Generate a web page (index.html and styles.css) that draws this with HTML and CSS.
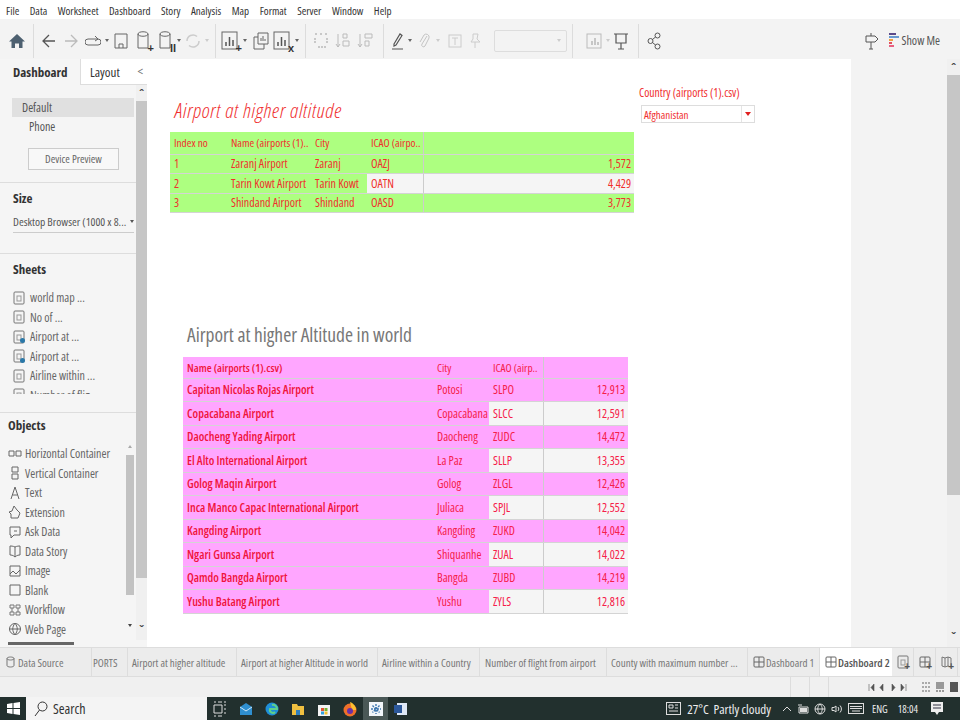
FILE: index.html
```html
<!DOCTYPE html>
<html lang="en">
<head>
  <meta charset="UTF-8">
  <title>Tableau - Dashboard 2</title>
  <link rel="stylesheet" href="styles.css">
</head>
<body>

  <svg class="defs" width="0" height="0">
    <symbol id="sheet" viewBox="0 0 12 14"><rect x="1" y="1" width="10" height="12" rx="1" fill="none" stroke="#777"/><rect x="4" y="5" width="4" height="5" fill="none" stroke="#999"/></symbol>
    <symbol id="cyl" viewBox="0 0 16 22"><path d="M3 4c0-3 10-3 10 0v14H3zM3 4c0 3 10 3 10 0" fill="none" stroke="#666"/></symbol>
    <symbol id="chart" viewBox="0 0 22 22"><rect x="2" y="2" width="15" height="17" fill="none" stroke="#666"/><path d="M6 16v-4M9.5 16V7M13 16v-6" stroke="#555" stroke-width="1.5"/></symbol>
    <symbol id="dash" viewBox="0 0 12 12"><rect x="1" y="1" width="10" height="10" rx="1" fill="none" stroke="#666"/><path d="M1 6h10M6 1v10" stroke="#666"/></symbol>
  </svg>

  <nav class="menubar">
    <span>File</span><span>Data</span><span>Worksheet</span><span>Dashboard</span><span>Story</span><span>Analysis</span><span>Map</span><span>Format</span><span>Server</span><span>Window</span><span>Help</span>
  </nav>

  <div class="toolbar">
    <span class="tool"><svg width="18" height="18" viewBox="0 0 18 18"><path d="M9 2 1 9.5h2.5V16H7v-4.5h4V16h3.5V9.5H17z" fill="#4d6070"/></svg></span>
    <span class="sep"></span>
    <span class="tool"><svg width="16" height="16" viewBox="0 0 16 16"><path d="M14 8H2M8 2 2 8l6 6" fill="none" stroke="#555" stroke-width="1.3"/></svg></span>
    <span class="tool"><svg width="16" height="16" viewBox="0 0 16 16"><path d="M2 8h12M8 2l6 6-6 6" fill="none" stroke="#bbb" stroke-width="1.3"/></svg></span>
    <span class="tool"><svg width="16" height="12" viewBox="0 0 16 12"><path d="M3 4h10a2.5 2.5 0 0 1 0 6H3a2.5 2.5 0 0 1 0-6M10 1l3 3-3 2" fill="none" stroke="#666"/></svg></span>
    <span class="caret"></span>
    <span class="tool"><svg width="14" height="16" viewBox="0 0 14 16"><path d="M1 1h12v14H1zM5 15v-4h4v4" fill="none" stroke="#666"/></svg></span>
    <span class="tool has-plus"><svg width="16" height="22"><use href="#cyl"/></svg><b class="plus">+</b></span>
    <span class="tool has-plus"><svg width="16" height="22"><use href="#cyl"/></svg><b class="plus">II</b></span>
    <span class="caret"></span>
    <span class="tool"><svg width="16" height="16" viewBox="0 0 16 16"><path d="M2 8a6 6 0 0 1 10-4.5M14 8a6 6 0 0 1-10 4.5" fill="none" stroke="#ccc" stroke-width="1.5"/></svg></span>
    <span class="caret off"></span>
    <span class="sep"></span>
    <span class="tool has-plus"><svg width="22" height="22"><use href="#chart"/></svg><b class="plus">+</b></span>
    <span class="caret wide"></span>
    <span class="tool"><svg width="18" height="18" viewBox="0 0 18 18"><path d="M6 1h10v11H6zM2 5h4M2 5v12h10v-5" fill="none" stroke="#666"/><path d="M9 9V6M11 9V4M13 9V7" stroke="#666"/></svg></span>
    <span class="tool has-plus"><svg width="22" height="22"><use href="#chart"/></svg><b class="plus">x</b></span>
    <span class="caret"></span>
    <span class="sep"></span>
    <span class="tool"><svg width="16" height="18" viewBox="0 0 16 18"><path d="M2 2h2M7 2h2M12 2h2M2 6v6M14 6v6M5 15h8" fill="none" stroke="#bbb" stroke-width="1.5" stroke-dasharray="2 1"/></svg></span>
    <span class="tool"><svg width="16" height="18" viewBox="0 0 16 18"><path d="M3 2v13M1 12l2 3 2-3M8 2h4v4H8zM8 9h6v5H8z" fill="none" stroke="#bbb"/></svg></span>
    <span class="tool"><svg width="16" height="18" viewBox="0 0 16 18"><path d="M3 2v13M1 12l2 3 2-3M8 2h7v4H8zM8 9h4v5H8z" fill="none" stroke="#bbb"/></svg></span>
    <span class="sep push"></span>
    <span class="tool slim"><svg width="14" height="18" viewBox="0 0 14 18"><path d="M3 12 9 2l2 1.5L5 13l-2 1zM1 17h11" fill="none" stroke="#555" stroke-width="1.2"/></svg></span>
    <span class="caret"></span>
    <span class="tool"><svg width="12" height="18" viewBox="0 0 12 18"><path d="M9 4 4 12a1.8 1.8 0 0 0 3 2l4-8a3 3 0 0 0-5-3L2 10" fill="none" stroke="#c4c4c4"/></svg></span>
    <span class="caret off"></span>
    <span class="tool tight apart"><svg width="14" height="14" viewBox="0 0 14 14"><rect x="1" y="1" width="12" height="12" fill="none" stroke="#ccc"/><path d="M4 4h6M7 4v7" stroke="#ccc"/></svg></span>
    <span class="tool tight"><svg width="12" height="16" viewBox="0 0 12 16"><path d="M4 1h5L8 6l3 3H2l2-3zM6 9v6" fill="none" stroke="#ccc"/></svg></span>
    <span class="fit-select"><span class="caret off"></span></span>
    <span class="sep wide"></span>
    <span class="tool"><svg width="16" height="16" viewBox="0 0 16 16"><rect x="1" y="1" width="14" height="14" fill="none" stroke="#bbb"/><path d="M6 12V8M9 12V5M12 12V9" stroke="#999"/></svg></span>
    <span class="caret off"></span>
    <span class="tool tight"><svg width="16" height="18" viewBox="0 0 16 18"><path d="M1 2h14M3 2v9h10V2M8 11v6M5 17h6" fill="none" stroke="#555" stroke-width="1.2"/></svg></span>
    <span class="sep push"></span>
    <span class="tool"><svg width="14" height="18" viewBox="0 0 14 18"><circle cx="3.5" cy="9" r="2.5" fill="none" stroke="#555"/><circle cx="10.5" cy="3.5" r="2.5" fill="none" stroke="#555"/><circle cx="10.5" cy="14.5" r="2.5" fill="none" stroke="#555"/><path d="m5.5 7.5 3-2.5M5.5 10.5l3 2.5" stroke="#555"/></svg></span>
    <span class="toolbar-right">
      <svg width="14" height="18" viewBox="0 0 14 18"><path d="M1 4h9l3 3-3 3H1zM6 1v3M6 10v7M4 17h4" fill="none" stroke="#555"/></svg>
      <svg class="showme-icon" width="11" height="15" viewBox="0 0 11 15"><path d="M1 0h7v2H1z" fill="#5b4a8a"/><path d="M1 3h10v2H1z" fill="#6a9ad0"/><path d="M1 6h4v2H1z" fill="#f0a040"/><path d="M1 9h3v2H1z" fill="#e05060"/><path d="M1 12h5v2H1z" fill="#e86080"/></svg>
      <span class="showme">Show Me</span>
    </span>
  </div>

  <div class="workspace">
    <aside class="sidebar">
      <div class="side-main">
        <div class="tabs">
          <span class="tab active">Dashboard</span>
          <span class="tab">Layout</span>
          <span class="collapse">&lt;</span>
        </div>

        <div class="side-scroll">
          <div class="side-content">
            <section class="device">
              <div class="device-row selected">Default</div>
              <div class="device-row indent">Phone</div>
              <div class="device-btn">Device Preview</div>
            </section>

            <section class="size">
              <h4>Size</h4>
              <div class="size-select"><span>Desktop Browser (1000 x 8...</span><i class="down"></i></div>
            </section>

            <section class="sheets">
              <h4>Sheets</h4>
              <ul class="sheet-list">
                <li><svg width="12" height="14"><use href="#sheet"/></svg>world map ...</li>
                <li><svg width="12" height="14"><use href="#sheet"/></svg>No of ...</li>
                <li class="used"><svg width="12" height="14"><use href="#sheet"/></svg>Airport at ...</li>
                <li class="used"><svg width="12" height="14"><use href="#sheet"/></svg>Airport at ...</li>
                <li><svg width="12" height="14"><use href="#sheet"/></svg>Airline within ...</li>
                <li><svg width="12" height="14"><use href="#sheet"/></svg>Number of flig...</li>
              </ul>
            </section>

            <section class="objects">
              <h4>Objects</h4>
              <div class="objects-body">
                <ul class="object-list">
                  <li><svg width="14" height="14" viewBox="0 0 14 14"><path d="M1 4h5v5H1zM8 4h5v5H8z" fill="none" stroke="#666"/></svg>Horizontal Container</li>
                  <li><svg width="14" height="14" viewBox="0 0 14 14"><path d="M4 1h6v5H4zM4 8h6v5H4z" fill="none" stroke="#666"/></svg>Vertical Container</li>
                  <li><svg width="14" height="14" viewBox="0 0 14 14"><path d="m3 13 4-12 4 12M4.5 9h5" fill="none" stroke="#666"/></svg>Text</li>
                  <li><svg width="14" height="14" viewBox="0 0 14 14"><path d="M6 1l3 4 3 3-2 5H3V9L1 7l3-1z" fill="none" stroke="#666"/></svg>Extension</li>
                  <li><svg width="14" height="14" viewBox="0 0 14 14"><path d="M2 2h10v8H6l-3 3v-3H2z" fill="none" stroke="#666"/><path d="M6 6h3" stroke="#666"/></svg>Ask Data</li>
                  <li><svg width="14" height="14" viewBox="0 0 14 14"><path d="M7 3C5 2 3 2 2 2v9c1 0 3 0 5 2 2-2 4-2 5-2V2c-1 0-3 0-5 1zM7 3v10" fill="none" stroke="#666"/></svg>Data Story</li>
                  <li><svg width="14" height="14" viewBox="0 0 14 14"><path d="M2 2h10v10H2zM2 10l3-3 3 3 4-4" fill="none" stroke="#666"/></svg>Image</li>
                  <li><svg width="14" height="14" viewBox="0 0 14 14"><path d="M2 2h10v10H2z" fill="none" stroke="#666"/></svg>Blank</li>
                  <li><svg width="14" height="14" viewBox="0 0 14 14"><path d="M2 2h4v3H2zM8 2h4v3H8zM2 9h4v3H2zM8 9h4v3H8zM4 5v4M10 5v4" fill="none" stroke="#777"/></svg>Workflow</li>
                  <li><svg width="14" height="14" viewBox="0 0 14 14"><circle cx="7" cy="7" r="5.5" fill="none" stroke="#666"/><path d="M1.5 7h11M7 1.5c-3 3-3 8 0 11M7 1.5c3 3 3 8 0 11" fill="none" stroke="#666"/></svg>Web Page</li>
                </ul>
                <div class="objects-scroll"><i class="arrow up"></i><span class="objects-thumb"></span><i class="arrow dn"></i></div>
              </div>
            </section>
          </div>

          <div class="side-scrollbar"><b class="chev">&#710;</b><span class="side-thumb"></span><b class="chev low">&#711;</b></div>
        </div>

        <div class="side-hscroll"><span></span></div>
      </div>
    </aside>

    <main class="canvas">
      <div class="top-row">
        <div class="top-left">
          <h1 class="title-red">Airport at higher altitude</h1>
          <table class="grid green">
            <colgroup><col class="g1"><col class="g2"><col class="g3"><col class="g4"><col></colgroup>
            <tr class="head"><td>Index no</td><td>Name (airports (1)..</td><td>City</td><td class="rb">ICAO (airpo..</td><td></td></tr>
            <tr><td>1</td><td>Zaranj Airport</td><td>Zaranj</td><td class="rb">OAZJ</td><td class="num">1,572</td></tr>
            <tr class="alt"><td>2</td><td>Tarin Kowt Airport</td><td>Tarin Kowt</td><td class="rb">OATN</td><td class="num">4,429</td></tr>
            <tr><td>3</td><td>Shindand Airport</td><td>Shindand</td><td class="rb">OASD</td><td class="num">3,773</td></tr>
          </table>
        </div>
        <div class="filter">
          <div class="filter-label">Country (airports (1).csv)</div>
          <div class="filter-box"><span>Afghanistan</span><i class="filter-arrow"></i></div>
        </div>
      </div>

      <h2 class="title-grey">Airport at higher Altitude in world</h2>
      <table class="grid pink">
        <colgroup><col class="p1"><col class="p2"><col class="p3"><col></colgroup>
        <tr class="head"><td>Name (airports (1).csv)</td><td>City</td><td class="rb">ICAO (airp..</td><td></td></tr>
        <tr><td class="name">Capitan Nicolas Rojas Airport</td><td>Potosi</td><td class="rb">SLPO</td><td class="num">12,913</td></tr>
        <tr class="alt"><td class="name">Copacabana Airport</td><td>Copacabana</td><td class="rb">SLCC</td><td class="num">12,591</td></tr>
        <tr><td class="name">Daocheng Yading Airport</td><td>Daocheng</td><td class="rb">ZUDC</td><td class="num">14,472</td></tr>
        <tr class="alt"><td class="name">El Alto International Airport</td><td>La Paz</td><td class="rb">SLLP</td><td class="num">13,355</td></tr>
        <tr><td class="name">Golog Maqin Airport</td><td>Golog</td><td class="rb">ZLGL</td><td class="num">12,426</td></tr>
        <tr class="alt"><td class="name">Inca Manco Capac International Airport</td><td>Juliaca</td><td class="rb">SPJL</td><td class="num">12,552</td></tr>
        <tr><td class="name">Kangding Airport</td><td>Kangding</td><td class="rb">ZUKD</td><td class="num">14,042</td></tr>
        <tr class="alt"><td class="name">Ngari Gunsa Airport</td><td>Shiquanhe</td><td class="rb">ZUAL</td><td class="num">14,022</td></tr>
        <tr><td class="name">Qamdo Bangda Airport</td><td>Bangda</td><td class="rb">ZUBD</td><td class="num">14,219</td></tr>
        <tr class="alt"><td class="name">Yushu Batang Airport</td><td>Yushu</td><td class="rb">ZYLS</td><td class="num">12,816</td></tr>
      </table>
    </main>

    <div class="margin-area"></div>
    <div class="page-scrollbar"><b class="chev">&#710;</b><span class="page-thumb"></span><b class="chev low">&#711;</b></div>
  </div>

  <div class="sheet-tabs">
    <span class="sheet-tab t-source"><svg width="9" height="12" viewBox="0 0 9 12"><path d="M1 2.5c0-2 7-2 7 0v7c0 2-7 2-7 0zM1 2.5c0 2 7 2 7 0" fill="none" stroke="#777"/></svg>Data Source</span>
    <span class="sheet-tab t-ports">PORTS</span>
    <span class="sheet-tab t-a">Airport at higher altitude</span>
    <span class="sheet-tab t-b">Airport at higher Altitude in world</span>
    <span class="sheet-tab t-c">Airline within a Country</span>
    <span class="sheet-tab t-d">Number of flight from airport</span>
    <span class="sheet-tab t-e">County with maximum number ...</span>
    <span class="sheet-tab t-f"><svg width="12" height="12"><use href="#dash"/></svg>Dashboard 1</span>
    <span class="sheet-tab t-g"><svg width="12" height="12"><use href="#dash"/></svg>Dashboard 2</span>
    <span class="tab-add"><svg width="12" height="14"><use href="#sheet"/></svg><b>+</b></span>
    <span class="tab-add"><svg width="12" height="12"><use href="#dash"/></svg><b>+</b></span>
    <span class="tab-add"><svg width="12" height="14" viewBox="0 0 12 14"><path d="M1 2l3 1 3-1 3 1v9l-3-1-3 1-3-1zM4 3v9M7 2v9" fill="none" stroke="#777"/></svg><b>+</b></span>
  </div>

  <div class="statusbar">
    <span class="st-cell st-a"></span><span class="st-cell st-b"></span><span class="st-cell st-b"></span>
    <span class="st-nav">
      <svg width="40" height="7" viewBox="0 0 40 7"><path d="M1 0v7M6 0 3 3.5 6 7zM15 0l-3 3.5L15 7zM24 0l3 3.5L24 7zM33 0l3 3.5L33 7zM38 0v7" fill="#555" stroke="#555" stroke-width=".6"/></svg>
    </span>
    <span class="st-views">
      <svg width="9" height="10" viewBox="0 0 9 10"><path d="M0 0h2v2H0zM3 0h2v2H3zM6 0h2v2H6zM0 4h2v2H0zM3 4h2v2H3zM6 4h2v2H6zM0 8h2v2H0zM3 8h2v2H3zM6 8h2v2H6z" fill="#aaa"/></svg>
      <svg width="9" height="10" viewBox="0 0 9 10"><path d="M0 0h8v7H0zM0 8h2v2H0zM3 8h2v2H3zM6 8h2v2H6z" fill="#999"/></svg>
      <svg width="9" height="10" viewBox="0 0 9 10"><path d="M0 0h8v10H0z" fill="#555"/></svg>
    </span>
  </div>

  <footer class="taskbar">
    <span class="start"><svg width="13" height="13" viewBox="0 0 13 13"><path d="M0 2l5.5-1v5H0zM6.5 1 13 0v6H6.5zM0 7h5.5v5L0 11zM6.5 7H13v6l-6.5-1z" fill="#fff"/></svg></span>
    <span class="search"><svg width="14" height="16" viewBox="0 0 14 16"><circle cx="8.5" cy="5.5" r="4.5" fill="none" stroke="#333"/><path d="M5.5 9 1 15" stroke="#333"/></svg>Search</span>
    <span class="task-icons">
      <svg width="14" height="16" viewBox="0 0 14 16"><path d="M1 1h2M5 1h4M11 1h2M1 4h8v8H1zM11 4h2M11 8h2M11 12h2M1 15h2M5 15h4" fill="none" stroke="#ddd"/></svg>
      <svg width="14" height="14" viewBox="0 0 14 14"><path d="M1 5 7 1l6 4v8H1z" fill="#2f8fd0"/><path d="m1 5 6 4 6-4" fill="none" stroke="#cfe8f8"/></svg>
      <svg width="14" height="14" viewBox="0 0 14 14"><circle cx="7" cy="7" r="6.5" fill="#1f8fd8"/><path d="M7 3a4 4 0 0 1 5 4H5a3 3 0 0 0 5 3" fill="none" stroke="#5fd08a" stroke-width="2"/></svg>
      <svg width="14" height="14" viewBox="0 0 14 14"><path d="M1 2h5l1 2h6v9H1z" fill="#f0c040"/><path d="M5 8h4v5H5z" fill="#2f80c0"/></svg>
      <svg width="14" height="14" viewBox="0 0 14 14"><rect x="1" y="3" width="12" height="11" fill="#f4f4f4"/><path d="M4 6h3v3H4z" fill="#e05030"/><path d="M7.5 6h3v3h-3z" fill="#70b030"/><path d="M4 9.5h3v3H4z" fill="#30a0e0"/><path d="M7.5 9.5h3v3h-3z" fill="#f0c030"/></svg>
      <svg width="14" height="16" viewBox="0 0 14 16"><circle cx="7" cy="9" r="6.5" fill="#f0702a"/><path d="M7 1c3 1 6 4 6 8H9z" fill="#ffc030"/><circle cx="7" cy="10" r="3" fill="#6a2fa8"/></svg>
      <span class="task-active"><svg width="14" height="14" viewBox="0 0 14 14"><rect width="14" height="14" fill="#f2f6fa"/><path d="M7 2v10M2 7h10M3.5 3.5l7 7M10.5 3.5l-7 7" stroke="#3f78b0" stroke-width="1.4" stroke-dasharray="2 1"/></svg></span>
      <svg width="14" height="14" viewBox="0 0 14 14"><rect x="3" y="1" width="10" height="12" fill="#dfe8f6"/><rect x="0" y="3" width="8" height="8" fill="#2b579a"/></svg>
    </span>
    <span class="tray">
      <svg class="news" width="15" height="13" viewBox="0 0 15 13"><rect x=".5" y=".5" width="14" height="12" fill="none" stroke="#ddd"/><path d="M3 3h4v3H3zM9 3h3M9 6h3M3 9h9" fill="none" stroke="#ddd"/></svg>
      <span class="weather">27°C&nbsp; Partly cloudy</span>
      <svg class="up" width="10" height="6" viewBox="0 0 10 6"><path d="m1 5 4-4 4 4" fill="none" stroke="#ddd"/></svg>
      <svg width="12" height="10" viewBox="0 0 12 10"><path d="M2 3h9v6H2zM1 1h4" fill="none" stroke="#ddd"/><path d="M3 4h7v4H3z" fill="#ddd"/></svg>
      <svg width="12" height="12" viewBox="0 0 12 12"><circle cx="6" cy="6" r="5" fill="none" stroke="#ddd"/><path d="M1 6h10M6 1c-3 3-3 7 0 10M6 1c3 3 3 7 0 10" fill="none" stroke="#ddd"/></svg>
      <svg width="12" height="10" viewBox="0 0 12 10"><path d="M1 3.5h2L5 2v6L3 6.5H1zM7 3a3 3 0 0 1 0 4M9 1.5a5 5 0 0 1 0 7" fill="none" stroke="#ddd"/></svg>
      <svg class="keyboard" width="16" height="11" viewBox="0 0 16 11"><rect x=".5" y=".5" width="15" height="10" fill="none" stroke="#ddd"/><path d="M2 3.5h12M2 5.5h12M4 8h8" stroke="#ddd"/></svg>
      <span class="tray-text eng">ENG</span>
      <span class="tray-text clock">18:04</span>
      <svg class="notif" width="12" height="14" viewBox="0 0 12 14"><path d="M0 0h12v10H8l-2 3-2-3H0z" fill="#eee"/><path d="M2 3h8M2 6h8" stroke="#334"/></svg>
    </span>
  </footer>

</body>
</html>
```

FILE: styles.css
```css
* {
  box-sizing: border-box;
}

html, body {
  margin: 0;
  height: 720px;
  overflow: hidden;
}

body {
  font-family: "Open Sans", "Liberation Sans", sans-serif;
  font-stretch: 75%;
  font-size: 12px;
  color: #444;
  background: #fff;
  display: flex;
  flex-direction: column;
}

.defs {
  position: absolute;
}

svg {
  flex: none;
  display: block;
}

ul {
  list-style: none;
  margin: 0;
  padding: 0;
}

/* menu + toolbar */
.menubar {
  height: 19px;
  display: flex;
  gap: 10.5px;
  align-items: center;
  padding: 2px 0 0 6px;
  font-size: 11px;
  color: #333;
}

.toolbar {
  height: 40px;
  background: #f3f3f3;
  display: flex;
  align-items: center;
  padding: 3px 0 0 6px;
}

.tool {
  width: 22px;
  height: 26px;
  flex: none;
  display: flex;
  align-items: center;
  justify-content: center;
  position: relative;
}

.tool.slim {
  width: 19px;
}

.tool.tight {
  width: 20px;
}

.tool.apart {
  margin-left: 4px;
}

.plus {
  position: absolute;
  right: 0;
  bottom: 0;
  font: bold 11px/11px "Liberation Sans", sans-serif;
  color: #333;
}

.caret {
  width: 6px;
  height: 3px;
  flex: none;
  position: relative;
}

.caret::after {
  content: "";
  position: absolute;
  left: 1px;
  top: 0;
  border: 2px solid transparent;
  border-top: 3px solid #666;
  border-bottom: 0;
}

.caret.off::after {
  border-top-color: #ccc;
}

.caret.wide {
  width: 8px;
}

.sep {
  width: 1px;
  height: 34px;
  flex: none;
  background: #dcdcdc;
  margin: 0 4px 0 5px;
}

.sep.push {
  margin-left: 7px;
}

.sep.wide {
  margin-right: 10px;
}

.fit-select {
  width: 73px;
  height: 22px;
  flex: none;
  margin-left: 9px;
  border: 1px solid #ddd;
  border-radius: 2px;
  display: flex;
  align-items: center;
  justify-content: flex-end;
  padding-right: 4px;
}

.toolbar-right {
  margin-left: auto;
  display: flex;
  align-items: center;
  padding-right: 20px;
}

.showme-icon {
  margin-left: 9px;
}

.showme {
  margin-left: 3px;
  font-size: 12px;
  color: #555;
}

/* main area */
.workspace {
  height: 588px;
  display: flex;
}

.sidebar {
  width: 147px;
  flex: none;
  background: #f5f5f5;
}

.side-main {
  height: 100%;
  display: flex;
  flex-direction: column;
}

.tabs {
  height: 26px;
  flex: none;
  display: flex;
  position: relative;
  font-size: 13px;
  line-height: 27px;
}

.tab {
  padding-left: 13px;
  width: 80px;
  border-bottom: 1px solid #ddd;
  color: #333;
}

.tab.active {
  font-weight: bold;
  border-bottom: 0;
}

.tab:not(.active) {
  width: 67px;
  padding-left: 9px;
  background: #fff;
  border-left: 1px solid #ddd;
}

.collapse {
  position: absolute;
  right: 4px;
  top: -1px;
  color: #777;
}

.side-scroll {
  flex: 1;
  min-height: 0;
  display: flex;
}

.side-content {
  width: 136px;
  flex: none;
}

h4 {
  margin: 0;
  height: 18px;
  line-height: 18px;
  font-size: 13px;
  font-weight: bold;
  color: #333;
}

.device {
  height: 98px;
  padding-top: 13px;
  border-bottom: 1px solid #ddd;
}

.device-row {
  margin-left: 12px;
  width: 122px;
  height: 19px;
  line-height: 19px;
  padding-left: 10px;
  color: #555;
}

.device-row.selected {
  background: #e0e0e0;
}

.device-row.indent {
  padding-left: 17px;
}

.device-btn {
  margin: 12px 0 0 28px;
  width: 91px;
  height: 22px;
  line-height: 20px;
  text-align: center;
  background: #f8f8f8;
  border: 1px solid #ccc;
  font-size: 11px;
  color: #666;
}

.size {
  height: 71px;
  padding: 6px 0 0 13px;
  border-bottom: 1px solid #ddd;
}

.size-select {
  margin-top: 4px;
  height: 22px;
  width: 121px;
  display: flex;
  justify-content: space-between;
  align-items: center;
  border-bottom: 1px solid #ccc;
  font-size: 11.5px;
  color: #555;
  white-space: nowrap;
}

.down {
  border: 2px solid transparent;
  border-top: 3px solid #555;
  border-bottom: 0;
}

.sheets {
  height: 159px;
  padding: 6px 0 0 13px;
  border-bottom: 1px solid #ddd;
  overflow: hidden;
}

.sheet-list {
  margin-top: 10px;
  height: 106px;
  overflow: hidden;
}

.sheet-list li {
  height: 19.5px;
  display: flex;
  align-items: center;
  gap: 5px;
  color: #666;
  position: relative;
}

.sheet-list li.used::after {
  content: "";
  position: absolute;
  left: 7px;
  top: 11px;
  width: 5px;
  height: 5px;
  border-radius: 50%;
  background: #2a78a8;
}

.objects {
  padding: 3px 1px 0 8px;
}

.objects-body {
  margin-top: 10px;
  display: flex;
  justify-content: space-between;
}

.object-list li {
  height: 19.5px;
  display: flex;
  align-items: center;
  gap: 3px;
  color: #666;
  white-space: nowrap;
}

.objects-scroll {
  width: 9px;
  height: 190px;
  margin-top: -4px;
  position: relative;
  background: #f5f5f5;
}

.objects-thumb {
  position: absolute;
  left: 0;
  top: 15px;
  width: 8px;
  height: 140px;
  background: #c2c2c2;
}

.arrow {
  position: absolute;
  left: 2px;
  border: 2px solid transparent;
}

.arrow.up {
  top: 5px;
  border-bottom: 3px solid #aaa;
  border-top: 0;
}

.arrow.dn {
  bottom: 3px;
  border-top: 3px solid #444;
  border-bottom: 0;
}

.side-scrollbar {
  width: 11px;
  flex: none;
  display: flex;
  flex-direction: column;
  background: #f0f0f0;
  position: relative;
}

.chev {
  height: 16px;
  flex: none;
  text-align: center;
  font: bold 12px/20px "Liberation Sans", sans-serif;
  color: #444;
}

.chev.low {
  line-height: 14px;
}

.side-thumb {
  flex: 1;
  background: #c6c6c6;
  margin-bottom: 46px;
}

.side-hscroll {
  height: 7px;
  flex: none;
  padding: 2px 12px 2px 8px;
}

.side-hscroll span {
  display: block;
  width: 66px;
  height: 3px;
  background: #666;
}

/* dashboard canvas */
.canvas {
  width: 704px;
  flex: none;
  background: #fff;
  padding: 0 0 0 23px;
}

.top-row {
  display: flex;
  height: 153px;
  align-items: flex-start;
}

.top-left {
  width: 470px;
  flex: none;
  padding-top: 39px;
}

.title-red {
  margin: 0 0 10px 5px;
  height: 24px;
  font-size: 21px;
  line-height: 24px;
  letter-spacing: .6px;
  font-weight: 300;
  font-style: italic;
  color: #f03030;
}

.title-grey {
  margin: 111px 0 10px 17px;
  height: 24px;
  font-size: 19.5px;
  line-height: 24px;
  font-weight: normal;
  color: #777;
}

.filter {
  padding-top: 26px;
}

.filter-label {
  margin-left: -1px;
  color: #f03030;
  font-size: 11.7px;
  height: 14px;
  line-height: 14px;
}

.filter-box {
  margin: 6px 0 0 1px;
  width: 114px;
  height: 18px;
  display: flex;
  justify-content: space-between;
  align-items: center;
  background: #fff;
  border: 1px solid #ddd;
  padding-left: 2px;
  color: #f03030;
  font-size: 11px;
}

.filter-arrow {
  width: 13px;
  height: 100%;
  position: relative;
  border-left: 1px solid #e4e4e4;
}

.filter-arrow::after {
  content: "";
  position: absolute;
  left: 3px;
  top: 6px;
  border: 3px solid transparent;
  border-top: 4px solid #e02020;
  border-bottom: 0;
}

/* tables */
.grid {
  border-collapse: collapse;
  table-layout: fixed;
  color: #f0302c;
  font-size: 12px;
}

.grid td {
  padding: 0 0 0 4px;
  white-space: nowrap;
  overflow: hidden;
  border-bottom: 1px solid #d4d4d4;
}

.grid .head td {
  font-size: 11.3px;
}

.grid .num {
  text-align: right;
  padding: 0 3px 0 0;
}

.grid .rb {
  border-right: 1px solid #ccc;
}

.green {
  width: 464px;
  background: #adff80;
}

.green tr {
  height: 19.5px;
}

.green tr.head {
  height: 22px;
}

.g1 { width: 57px; }
.g2 { width: 84px; }
.g3 { width: 56px; }
.g4 { width: 56px; }

.pink {
  margin-left: 13px;
  width: 445px;
  background: #ffa6ff;
  color: #f5204a;
}

.pink tr {
  height: 23.5px;
}

.pink tr.head {
  height: 21px;
}

.pink .name,
.pink .head td:first-child {
  font-weight: 600;
  color: #f0143c;
}

.p1 { width: 250px; }
.p2 { width: 56px; }
.p3 { width: 54px; }

.alt td:nth-last-child(-n+2) {
  background: #f5f5f5;
}

.margin-area {
  flex: 1;
  background: #f3f3f3;
}

.page-scrollbar {
  width: 13px;
  flex: none;
  display: flex;
  flex-direction: column;
  background: #f0f0f0;
}

.page-thumb {
  height: 420px;
  background: #c6c6c6;
  margin-bottom: auto;
}

/* sheet tabs */
.sheet-tabs {
  height: 30px;
  display: flex;
  background: #ececec;
  border-top: 1px solid #ddd;
  border-bottom: 1px solid #ddd;
  font-size: 11px;
  color: #777;
}

.sheet-tab {
  display: flex;
  align-items: center;
  gap: 3px;
  padding-left: 6px;
  border-right: 1px solid #ddd;
  white-space: nowrap;
  overflow: hidden;
  flex: none;
}

.t-source { width: 92px; }
.t-ports { width: 36px; padding-left: 1px; }
.t-a { width: 109px; padding-left: 4px; }
.t-b { width: 141px; padding-left: 4px; }
.t-c { width: 102px; padding-left: 4px; }
.t-d { width: 127px; padding-left: 5px; }
.t-e { width: 141px; padding-left: 4px; }
.t-f { width: 72px; padding-left: 5px; gap: 1px; }

.t-g {
  width: 72px;
  padding-left: 5px;
  gap: 1px;
  background: #fff;
  font-size: 11.2px;
  font-weight: 600;
  color: #555;
  border-right: 0;
}

.tab-add {
  width: 22px;
  flex: none;
  display: flex;
  align-items: center;
  justify-content: center;
  position: relative;
  border-right: 1px solid #ddd;
}

.tab-add b {
  position: absolute;
  right: 3px;
  bottom: 4px;
  font: bold 10px/10px "Liberation Sans", sans-serif;
  color: #555;
}

/* status bar */
.statusbar {
  height: 20px;
  display: flex;
  align-items: center;
  background: #f0f0f0;
}

.st-cell {
  height: 100%;
  border-right: 1px solid #ddd;
}

.st-a { width: 791px; }
.st-b { width: 19px; }

.st-nav {
  margin-left: 39px;
}

.st-views {
  margin-left: 14px;
  display: flex;
  gap: 5px;
}

/* windows taskbar */
.taskbar {
  height: 23px;
  display: flex;
  align-items: center;
  background: #22302e;
  color: #eee;
}

.start {
  width: 26px;
  flex: none;
  display: flex;
  justify-content: center;
}

.search {
  width: 181px;
  height: 100%;
  flex: none;
  display: flex;
  align-items: center;
  gap: 5px;
  padding-left: 8px;
  background: #f4f4f4;
  color: #333;
  font-size: 14px;
}

.task-icons {
  display: flex;
  align-items: center;
  gap: 12px;
  margin-left: 6px;
  height: 100%;
}

.task-active {
  width: 25px;
  height: 100%;
  margin: 0 -6px;
  display: flex;
  align-items: center;
  justify-content: center;
  background: #4a5856;
}

.tray {
  margin-left: auto;
  display: flex;
  align-items: center;
  gap: 5px;
  padding-right: 17px;
}

.weather {
  font-size: 13px;
  margin: 0 6px 0 1px;
}

.tray-text {
  font-size: 10.5px;
}

.eng {
  margin-left: 3px;
}

.clock {
  margin: 0 8px 0 5px;
}
```
